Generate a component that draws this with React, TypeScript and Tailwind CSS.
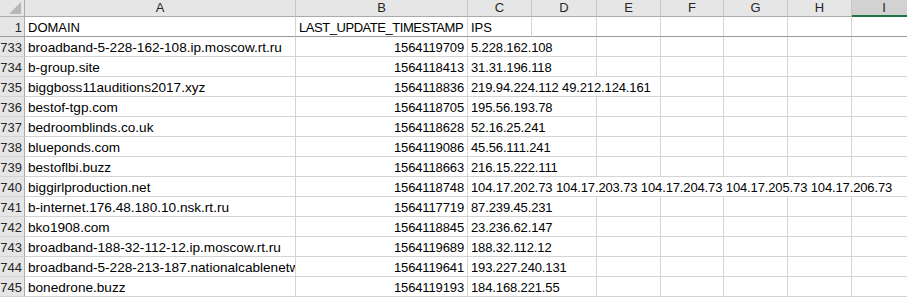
import * as React from "react";

type Row = { n: number; domain: string; ts: string; ips: string; span: number };

const rows: Row[] = [
  { n: 733, domain: "broadband-5-228-162-108.ip.moscow.rt.ru", ts: "1564119709", ips: "5.228.162.108", span: 2 },
  { n: 734, domain: "b-group.site", ts: "1564118413", ips: "31.31.196.118", span: 2 },
  { n: 735, domain: "biggboss11auditions2017.xyz", ts: "1564118836", ips: "219.94.224.112 49.212.124.161", span: 3 },
  { n: 736, domain: "bestof-tgp.com", ts: "1564118705", ips: "195.56.193.78", span: 2 },
  { n: 737, domain: "bedroomblinds.co.uk", ts: "1564118628", ips: "52.16.25.241", span: 2 },
  { n: 738, domain: "blueponds.com", ts: "1564119086", ips: "45.56.111.241", span: 2 },
  { n: 739, domain: "bestoflbi.buzz", ts: "1564118663", ips: "216.15.222.111", span: 2 },
  {
    n: 740,
    domain: "biggirlproduction.net",
    ts: "1564118748",
    ips: "104.17.202.73 104.17.203.73 104.17.204.73 104.17.205.73 104.17.206.73",
    span: 7,
  },
  { n: 741, domain: "b-internet.176.48.180.10.nsk.rt.ru", ts: "1564117719", ips: "87.239.45.231", span: 2 },
  { n: 742, domain: "bko1908.com", ts: "1564118845", ips: "23.236.62.147", span: 2 },
  { n: 743, domain: "broadband-188-32-112-12.ip.moscow.rt.ru", ts: "1564119689", ips: "188.32.112.12", span: 2 },
  { n: 744, domain: "broadband-5-228-213-187.nationalcablenetworks.ru", ts: "1564119641", ips: "193.227.240.131", span: 2 },
  { n: 745, domain: "bonedrone.buzz", ts: "1564119193", ips: "184.168.221.55", span: 2 },
];

const letters = ["A", "B", "C", "D", "E", "F", "G", "H", "I"];

const cell = "h-5 border-r border-b border-[#d4d4d4] px-[3px] pt-[3px] leading-[16px] whitespace-nowrap overflow-hidden";
const rowHead =
  "h-5 bg-[#e6e6e6] border-r border-r-[#ababab] border-b border-b-[#d4d4d4] text-right pr-[2px] pt-[3px] leading-[16px] text-[#262626]";
const frozen = "h-5 border-r border-r-[#d4d4d4] border-b border-b-[#9b9b9b] px-[3px] pt-[3px] leading-[16px] whitespace-nowrap";

function ipSpan(span: number): string {
  if (span === 7) return "col-span-7";
  if (span === 3) return "col-span-3";
  return "col-span-2";
}

export default function App(): React.JSX.Element {
  return (
    <div
      className="w-[907px] h-[299px] overflow-hidden bg-white text-black text-[13px]"
      style={{ fontFamily: "'Liberation Sans', Arial, sans-serif" }}
    >
      <div className="grid grid-cols-[25px_271px_172px_64px_65px_64px_63px_64px_64px_64px] w-[916px]">
        {/* column headers */}
        <div className="relative h-[17px] bg-[#e6e6e6] border-r border-b border-[#ababab]">
          <svg className="absolute right-[3px] bottom-[2px]" width="12" height="12" viewBox="0 0 12 12">
            <polygon points="12,0 12,12 0,12" fill="#b7b7b7" />
          </svg>
        </div>
        {letters.map((l) =>
          l === "I" ? (
            <div
              key={l}
              className="h-[17px] bg-[#d2d2d2] border-b-2 border-b-[#217346] text-center leading-[16px] text-[#262626]"
            >
              {l}
            </div>
          ) : (
            <div
              key={l}
              className="h-[17px] bg-[#e6e6e6] border-r border-r-[#c6c6c6] border-b border-b-[#ababab] text-center leading-[16px] text-[#262626]"
            >
              {l}
            </div>
          )
        )}

        {/* header row, frozen pane */}
        <div className="h-5 bg-[#e6e6e6] border-r border-r-[#ababab] border-b border-b-[#9b9b9b] text-right pr-[2px] pt-[3px] leading-[16px] text-[#262626]">
          1
        </div>
        <div className={frozen}>DOMAIN</div>
        <div className={frozen + " tracking-[-0.45px]"}>LAST_UPDATE_TIMESTAMP</div>
        <div className={frozen}>IPS</div>
        {Array.from({ length: 6 }).map((_, i) => (
          <div key={i} className={frozen} />
        ))}

        {rows.map((r) => (
          <React.Fragment key={r.n}>
            <div className={rowHead}>{r.n}</div>
            <div className={cell + " text-[13.6px]"}>{r.domain}</div>
            <div className={cell + " text-right tracking-[-0.13px]"}>{r.ts}</div>
            <div className={cell + " tracking-[-0.13px] " + ipSpan(r.span)}>{r.ips}</div>
            {Array.from({ length: 7 - r.span }).map((_, i) => (
              <div key={i} className={cell} />
            ))}
          </React.Fragment>
        ))}
      </div>
    </div>
  );
}
